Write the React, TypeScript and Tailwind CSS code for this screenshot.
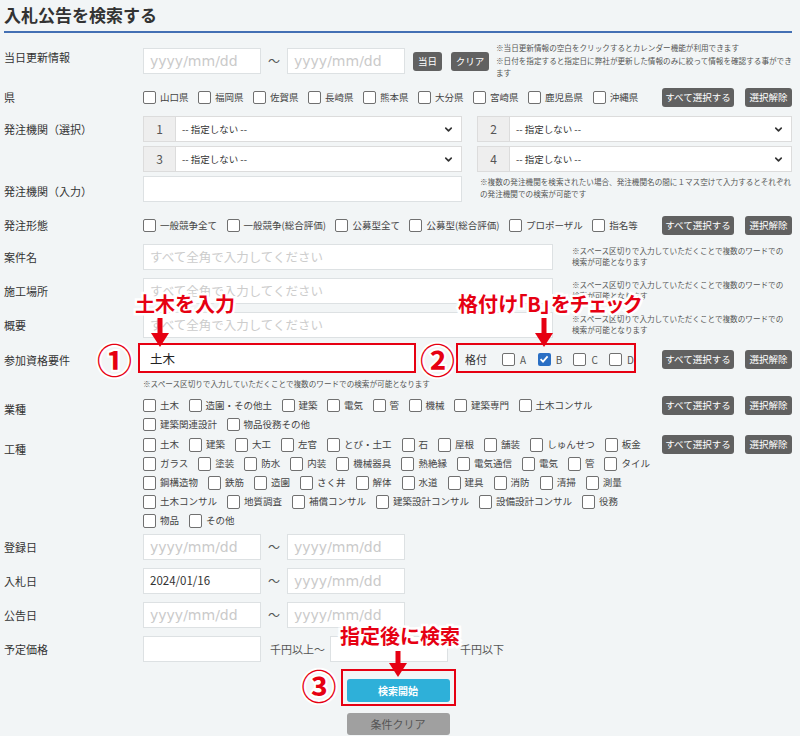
import { ChevronDown } from 'lucide-react';
import type { ReactNode } from 'react';

const RED = '#e60012';

const prefectures = ['山口県', '福岡県', '佐賀県', '長崎県', '熊本県', '大分県', '宮崎県', '鹿児島県', '沖縄県'];
const orderTypes = ['一般競争全て', '一般競争(総合評価)', '公募型全て', '公募型(総合評価)', 'プロポーザル', '指名等'];
const industries = [
  ['土木', '造園・その他土', '建築', '電気', '管', '機械', '建築専門', '土木コンサル'],
  ['建築関連設計', '物品役務その他'],
];
const works = [
  ['土木', '建築', '大工', '左官', 'とび・土工', '石', '屋根', '舗装', 'しゅんせつ', '板金'],
  ['ガラス', '塗装', '防水', '内装', '機械器具', '熱絶縁', '電気通信', '電気', '管', 'タイル'],
  ['鋼構造物', '鉄筋', '造園', 'さく井', '解体', '水道', '建具', '消防', '清掃', '測量'],
  ['土木コンサル', '地質調査', '補償コンサル', '建築設計コンサル', '設備設計コンサル', '役務'],
  ['物品', 'その他'],
];

function Check({ label, tall }: { label: string; tall?: boolean }) {
  return (
    <span className="flex items-center gap-[4px] text-[9.5px] text-[#444] whitespace-nowrap">
      <span className={`w-[13px] ${tall ? 'h-[14px]' : 'h-[13px]'} border border-[#707070] rounded-[2px] bg-white shrink-0`} />
      {label}
    </span>
  );
}

function GrayBtn({ children, className = '' }: { children: ReactNode; className?: string }) {
  return (
    <button className={`h-[19px] rounded-[3px] bg-[#616161] text-white text-[9.5px] flex items-center justify-center ${className}`}>
      {children}
    </button>
  );
}

function SelectAll() {
  return (
    <div className="ml-auto flex gap-[11px] shrink-0">
      <GrayBtn className="w-[72px]">すべて選択する</GrayBtn>
      <GrayBtn className="w-[47px]">選択解除</GrayBtn>
    </div>
  );
}

function DateBox({ value }: { value?: string }) {
  return (
    <div className="w-[118px] h-[26px] bg-white border border-[#dde1e3] flex items-center pl-[6px] shrink-0">
      {value ? (
        <span className="text-[11.5px] text-[#333]">{value}</span>
      ) : (
        <span className="text-[14px] text-[#cacaca] font-['DejaVu_Sans',sans-serif]">yyyy/mm/dd</span>
      )}
    </div>
  );
}

function Tilde() {
  return <span className="w-[26px] text-center text-[12px] text-[#555] shrink-0">～</span>;
}

function TextBox({ className = '' }: { className?: string }) {
  return (
    <div className={`h-[26px] bg-white border border-[#dde1e3] flex items-center pl-[6px] shrink-0 ${className}`}>
      <span className="text-[12.5px] text-[#cccccc]">すべて全角で入力してください</span>
    </div>
  );
}

function Note({ lines, className = '' }: { lines: string[]; className?: string }) {
  return (
    <div className={`text-[7.6px] text-[#555] whitespace-nowrap ${className}`}>
      {lines.map(l => (
        <div key={l}>{l}</div>
      ))}
    </div>
  );
}

function Sel({ n, className }: { n: string; className: string }) {
  return (
    <div className={`flex h-[26px] ${className}`}>
      <div className="w-[33px] bg-[#eeeeee] border border-[#dcdcdc] flex items-center justify-center text-[12px] text-[#555]">{n}</div>
      <div className="flex-1 bg-white border border-l-0 border-[#dcdcdc] flex items-center pl-[6px] pr-[7px] text-[9.5px] text-[#333]">
        <span className="flex-1">-- 指定しない --</span>
        <ChevronDown size={11} strokeWidth={3.5} />
      </div>
    </div>
  );
}

function Row({ label, labelClass = 'leading-[26px]', className = '', children }: { label: string; labelClass?: string; className?: string; children: ReactNode }) {
  return (
    <div className={`flex ${className}`}>
      <div className={`w-[139px] shrink-0 text-[11px] text-[#333] ${labelClass}`}>{label}</div>
      <div className="flex-1 min-w-0">{children}</div>
    </div>
  );
}

function Arrow({ h, className }: { h: number; className: string }) {
  return (
    <svg width="18" height={h} viewBox={`0 0 18 ${h}`} className={`absolute ${className}`}>
      <rect x="6.5" y="0" width="5" height={h - 13} fill={RED} />
      <polygon points={`0,${h - 14} 18,${h - 14} 9,${h}`} fill={RED} />
    </svg>
  );
}

const callout = "absolute text-[20px] leading-[22px] font-bold text-[#e60012] whitespace-nowrap [-webkit-text-stroke:5px_white] [paint-order:stroke_fill]";
const circled = "absolute text-[35px] leading-none font-bold text-[#e60012] [-webkit-text-stroke:4px_white] [paint-order:stroke_fill]";

const spaceNote = ['※スペース区切りで入力していただくことで複数のワードでの', '検索が可能となります'];

export default function App() {
  return (
    <div className="relative w-[800px] min-h-[736px] bg-[#f2f5f6] pl-[4px] pr-[8px] font-['Noto_Sans_CJK_JP','Noto_Sans',sans-serif]">
      <h1 className="h-[31px] text-[17px] leading-[30px] font-bold text-[#333]">入札公告を検索する</h1>
      <div className="h-[2px] bg-[#4470b4]" />

      <Row label="当日更新情報" labelClass="leading-[18px]" className="mt-[15px]">
        <div className="flex items-center h-[26px]">
          <DateBox />
          <Tilde />
          <DateBox />
          <GrayBtn className="w-[29px] ml-[8px]">当日</GrayBtn>
          <GrayBtn className="w-[38px] ml-[9px]">クリア</GrayBtn>
          <div className="h-[26px] ml-[7px] self-start">
            <Note className="-mt-[6px] leading-[12.5px]" lines={['※当日更新情報の空白をクリックするとカレンダー機能が利用できます', '※日付を指定すると指定日に弊社が更新した情報のみに絞って情報を確認する事ができ', 'ます']} />
          </div>
        </div>
      </Row>

      <Row label="県" labelClass="leading-[19px]" className="mt-[14px]">
        <div className="flex items-center h-[19px]">
          <div className="flex gap-x-[9.5px]">
            {prefectures.map(p => <Check key={p} label={p} />)}
          </div>
          <SelectAll />
        </div>
      </Row>

      <Row label="発注機関（選択）" className="mt-[9px]">
        <div className="flex flex-col gap-[4px]">
          <div className="flex">
            <Sel n="1" className="w-[319px]" />
            <Sel n="2" className="flex-1 ml-[15px]" />
          </div>
          <div className="flex">
            <Sel n="3" className="w-[319px]" />
            <Sel n="4" className="flex-1 ml-[15px]" />
          </div>
        </div>
      </Row>

      <Row label="発注機関（入力）" labelClass="leading-[26px] relative top-[2px]" className="mt-[4px]">
        <div className="flex h-[26px]">
          <div className="w-[319px] h-[26px] bg-white border border-[#dde1e3]" />
          <Note className="ml-[18px] leading-[12px]" lines={['※複数の発注機関を検索されたい場合、発注機関名の間に１マス空けて入力するとそれぞれ', 'の発注機関での検索が可能です']} />
        </div>
      </Row>

      <Row label="発注形態" labelClass="leading-[19px]" className="mt-[14px]">
        <div className="flex items-center h-[19px]">
          <div className="flex gap-x-[9.5px]">
            {orderTypes.map(p => <Check key={p} label={p} />)}
          </div>
          <SelectAll />
        </div>
      </Row>

      {['案件名', '施工場所', '概要'].map((l, i) => (
        <Row key={l} label={l} className={i === 0 ? 'mt-[9px]' : 'mt-[8px]'}>
          <div className="flex h-[26px]">
            <TextBox className="w-[410px]" />
            <Note className="ml-[19px] mt-[2px] leading-[10.5px]" lines={spaceNote} />
          </div>
        </Row>
      ))}

      <Row label="参加資格要件" labelClass="leading-[26px] relative top-[1px]" className="mt-[8px]">
        <div className="flex items-center h-[26px]">
          <div className="relative w-[269px] h-[26px]">
            <div className="absolute -left-[5px] -right-[4px] -top-[3px] -bottom-[1px] border-2 border-[#e60012] bg-white" />
            <div className="relative h-full flex items-center pl-[7px] text-[12.5px] text-[#222]">土木</div>
          </div>
          <div className="relative flex items-center ml-[53px] h-[26px]">
            <div className="absolute -left-[9px] -right-[2px] -top-[3px] -bottom-[1px] border-2 border-[#e60012]" />
            <span className="text-[11px] text-[#333] w-[37px]">格付</span>
            {['A', 'B', 'C', 'D'].map(g => (
              <span key={g} className={`flex items-center gap-[5px] text-[10px] text-[#555] ${g === 'D' ? '' : 'w-[35.7px]'}`}>
                {g === 'B' ? (
                  <span className="w-[13px] h-[13px] rounded-[2px] bg-[#2a6fc4] flex items-center justify-center">
                    <svg width="10" height="10" viewBox="0 0 10 10">
                      <path d="M1.6 5.2 L4 7.6 L8.6 2.4" stroke="white" strokeWidth="1.8" fill="none" />
                    </svg>
                  </span>
                ) : (
                  <span className="w-[13px] h-[13px] border border-[#707070] rounded-[2px] bg-white" />
                )}
                {g}
              </span>
            ))}
          </div>
          <SelectAll />
        </div>
        <Note className="mt-[6px] leading-[11px]" lines={['※スペース区切りで入力していただくことで複数のワードでの検索が可能となります']} />
      </Row>

      <Row label="業種" labelClass="leading-[19px] pt-[4px]" className="mt-[7px]">
        <div className="flex">
          <div className="flex flex-col">
            {industries.map((r, i) => (
              <div key={i} className="flex items-center h-[19px] gap-x-[9.5px]">
                {r.map(p => <Check key={p} label={p} />)}
              </div>
            ))}
          </div>
          <SelectAll />
        </div>
      </Row>

      <Row label="工種" labelClass="leading-[19px] pt-[5px]" className="mt-[1px]">
        <div className="flex">
          <div className="flex flex-col">
            {works.map((r, i) => (
              <div key={i} className="flex items-center h-[19px] gap-x-[10px]">
                {r.map(p => <Check key={p} label={p} tall />)}
              </div>
            ))}
          </div>
          <SelectAll />
        </div>
      </Row>

      {[
        ['登録日', '', 'mt-[4px]'],
        ['入札日', '2024/01/16', 'mt-[8px]'],
        ['公告日', '', 'mt-[8px]'],
      ].map(([l, v, m]) => (
        <Row key={l} label={l} className={m}>
          <div className="flex items-center h-[26px]">
            <DateBox value={v || undefined} />
            <Tilde />
            <DateBox />
          </div>
        </Row>
      ))}

      <Row label="予定価格" className="mt-[8px]">
        <div className="flex items-center h-[26px]">
          <div className="w-[118px] h-[26px] bg-white border border-[#dde1e3]" />
          <span className="ml-[9px] w-[60px] text-[11px] text-[#555]">千円以上～</span>
          <div className="w-[118px] h-[26px] bg-white border border-[#dde1e3]" />
          <span className="ml-[12px] text-[11px] text-[#555]">千円以下</span>
        </div>
      </Row>

      <div className="flex flex-col items-center mt-[14px]">
        <div className="relative">
          <div className="absolute -left-[6px] -right-[6px] -top-[7px] -bottom-[4px] border-2 border-[#e60012]" />
          <span className={`${circled} -left-[45px] -top-[9px]`}>③</span>
          <button className="relative w-[103px] h-[23px] rounded-[3px] bg-[#2eb0d9] text-white text-[10px] font-bold">検索開始</button>
        </div>
        <button className="mt-[11px] w-[103px] h-[22px] rounded-[3px] bg-[#a0a0a0] text-[#555] text-[11px]">条件クリア</button>
      </div>

      <span className={`${callout} left-[135px] top-[293px]`}>土木を入力</span>
      <Arrow h={29} className="left-[151px] top-[318px]" />
      <span className={`${circled} left-[97px] top-[341px]`}>①</span>

      <span className={`${callout} left-[458px] top-[293px] [font-feature-settings:'palt']`}>格付け「B」をチェック</span>
      <Arrow h={29} className="left-[535px] top-[318px]" />
      <span className={`${circled} left-[420px] top-[341px]`}>②</span>

      <span className={`${callout} left-[340px] top-[625px]`}>指定後に検索</span>
      <Arrow h={26} className="left-[389px] top-[651px]" />
    </div>
  );
}
